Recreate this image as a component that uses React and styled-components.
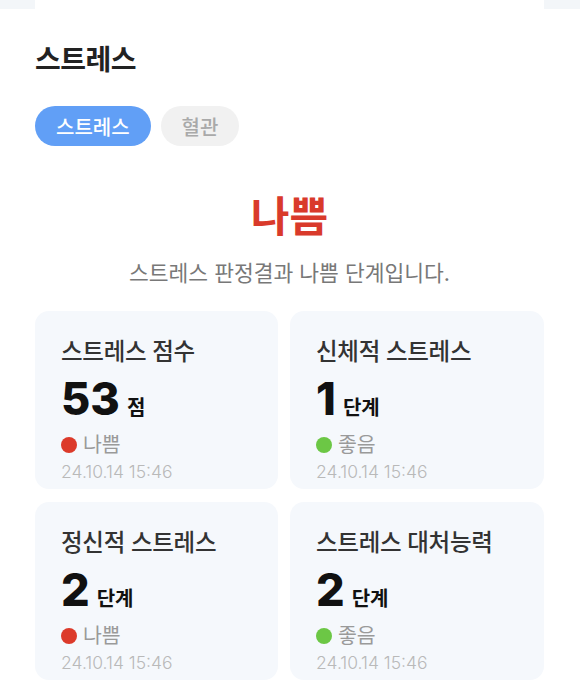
import React from 'react'
import styled, { createGlobalStyle } from 'styled-components'

const GlobalStyle = createGlobalStyle`
    html, body {
        margin: 0;
        padding: 0;
        background: #ffffff;
    }
    body {
        font-family: "Inter", "Noto Sans CJK KR", sans-serif;
        -webkit-font-smoothing: antialiased;
    }
`

const TopStrip = styled.div`
    height: 9px;
    background: #f3f6f9;
    padding: 0 36px 0 35px;
    display: flex;
`

const TopCard = styled.div`
    flex: 1;
    background: #ffffff;
`

const Section = styled.section`
    padding: 0 36px 0 35px;
    display: flex;
    flex-direction: column;
`

const Heading = styled.h2`
    margin: 34px 0 0;
    font-size: 28px;
    line-height: 34px;
    font-weight: 700;
    color: #222;
    letter-spacing: -0.5px;
`

const Tabs = styled.div`
    display: flex;
    gap: 10px;
    margin-top: 29px;
`

const Tab = styled.button`
    height: 40px;
    padding: 0 21px;
    border: none;
    border-radius: 20px;
    font-family: inherit;
    font-size: 20px;
    font-weight: 500;
    background: ${p => (p.$active ? '#619ff6' : '#f1f1f1')};
    color: ${p => (p.$active ? '#ffffff' : '#a9a9a9')};
`

const Verdict = styled.div`
    margin-top: 46px;
    text-align: center;
    font-size: 42px;
    line-height: 50px;
    font-weight: 700;
    color: ${p => p.$color};
`

const Summary = styled.p`
    margin: 17px 0 0;
    text-align: center;
    font-size: 21.5px;
    line-height: 28px;
    color: #787878;
`

const Grid = styled.div`
    margin-top: 24px;
    display: grid;
    grid-template-columns: 243fr 254fr;
    column-gap: 12px;
    row-gap: 13px;
`

const Card = styled.div`
    background: #f5f8fc;
    border-radius: 14px;
    height: 178px;
    box-sizing: border-box;
    padding: 26px 16px 0 26px;
    display: flex;
    flex-direction: column;
`

const CardTitle = styled.div`
    font-size: 23.5px;
    line-height: 30px;
    font-weight: 500;
    color: #333;
    letter-spacing: -0.3px;
    white-space: nowrap;
`

const ValueRow = styled.div`
    display: flex;
    align-items: baseline;
    margin-top: 8px;
    height: 48px;
`

const Value = styled.span`
    font-size: 45px;
    line-height: 48px;
    font-weight: 800;
    color: #111;
`

const Unit = styled.span`
    margin-left: 7px;
    font-size: 20px;
    font-weight: 700;
    color: #111;
`

const Status = styled.div`
    display: flex;
    align-items: center;
    gap: 6px;
    margin-top: 9px;
    font-size: 20.5px;
    line-height: 26px;
    color: #9a9a9a;
`

const Dot = styled.span`
    width: 16px;
    height: 16px;
    border-radius: 50%;
    background: ${p => p.$color};
`

const Stamp = styled.div`
    font-size: 17.5px;
    line-height: 22px;
    font-weight: 300;
    color: #b9b9b9;
    margin-top: 3px;
`

const BAD = '#dc3a2a'
const GOOD = '#6cc745'

const cards = [
    { title: '스트레스 점수', value: '53', unit: '점', status: '나쁨', color: BAD },
    { title: '신체적 스트레스', value: '1', unit: '단계', status: '좋음', color: GOOD },
    { title: '정신적 스트레스', value: '2', unit: '단계', status: '나쁨', color: BAD },
    { title: '스트레스 대처능력', value: '2', unit: '단계', status: '좋음', color: GOOD },
]

const StressCard = ({ title, value, unit, status, color }) => (
    <Card>
        <CardTitle>{title}</CardTitle>
        <ValueRow>
            <Value>{value}</Value>
            <Unit>{unit}</Unit>
        </ValueRow>
        <Status>
            <Dot $color={color} />
            {status}
        </Status>
        <Stamp>24.10.14 15:46</Stamp>
    </Card>
)

const App = () => {
    return (
        <>
            <GlobalStyle />
            <TopStrip>
                <TopCard />
            </TopStrip>
            <Section>
                <Heading>스트레스</Heading>
                <Tabs>
                    <Tab $active>스트레스</Tab>
                    <Tab>혈관</Tab>
                </Tabs>
                <Verdict $color="#d93a2b">나쁨</Verdict>
                <Summary>스트레스 판정결과 나쁨 단계입니다.</Summary>
                <Grid>
                    {cards.map((c) => (
                        <StressCard key={c.title} {...c} />
                    ))}
                </Grid>
            </Section>
        </>
    )
}

export default App
